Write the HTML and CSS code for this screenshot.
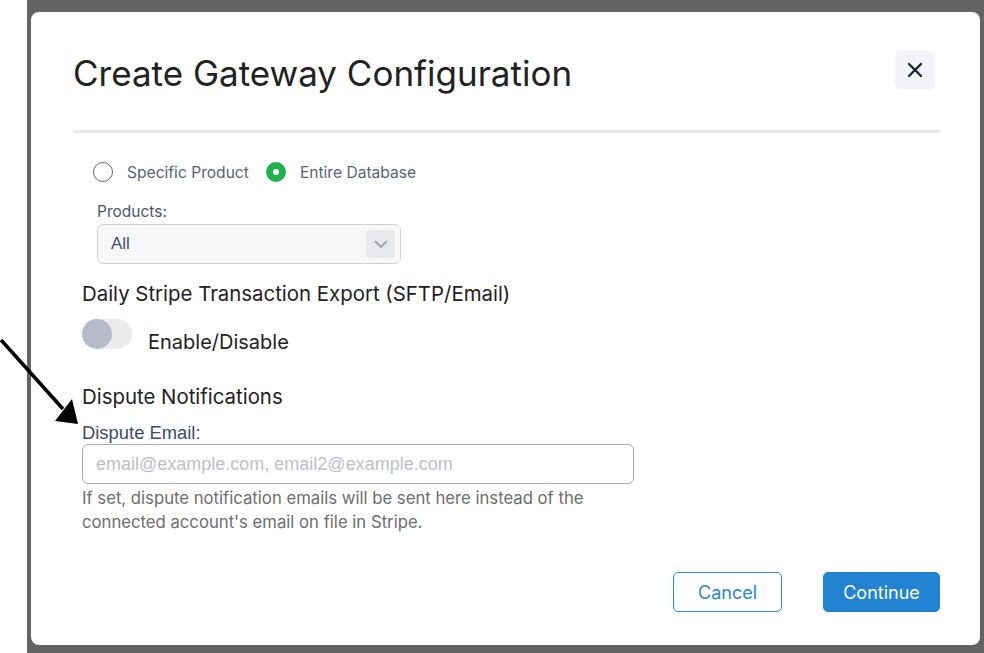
FILE: index.html
```html
<!DOCTYPE html>
<html lang="en">

<head>
  <meta charset="UTF-8">
  <meta name="viewport" content="width=device-width, initial-scale=1.0">
  <title>Create Gateway Configuration</title>
  <link rel="stylesheet" href="styles.css">
</head>

<body>
  <div class="margin"></div>

  <!-- pointer arrow drawn over the page -->
  <svg class="pointer" width="90" height="100" viewBox="0 0 90 100">
    <line x1="1" y1="10" x2="63" y2="79" stroke="#000" stroke-width="3.6" />
    <polygon points="78,94 55,91 72,69" fill="#000" />
  </svg>

  <div class="backdrop">
    <div class="modal">
      <div class="modalHeader">
        <h2 class="modalTitle">Create Gateway Configuration</h2>
        <button class="closeBtn">
          <svg width="16" height="16" viewBox="0 0 16 16">
            <path d="M2 2 L14 14 M14 2 L2 14" stroke="#1b2537" stroke-width="2.4" stroke-linecap="round" />
          </svg>
        </button>
      </div>

      <div class="modalBody">
        <div class="radioGroup">
          <label class="radio"><span class="radioDot"></span>Specific Product</label>
          <label class="radio"><span class="radioDot checked"></span>Entire Database</label>
        </div>

        <div class="productField">
          <div class="fieldLabel">Products:</div>
          <div class="select">
            <span>All</span>
            <span class="selectArrow">
              <svg width="16" height="10" viewBox="0 0 16 10">
                <path d="M2 2 L8 8 L14 2" fill="none" stroke="#9ba1ab" stroke-width="1.8" />
              </svg>
            </span>
          </div>
        </div>

        <h3 class="sectionTitle">Daily Stripe Transaction Export (SFTP/Email)</h3>
        <div class="toggleRow">
          <span class="toggle"><span class="knob"></span></span>
          <span class="toggleLabel">Enable/Disable</span>
        </div>

        <h3 class="sectionTitle dispute">Dispute Notifications</h3>
        <div class="emailLabel">Dispute Email:</div>
        <input class="emailInput" type="text" placeholder="email@example.com, email2@example.com">
        <p class="hint">If set, dispute notification emails will be sent here instead of the<br>connected account's email on file in Stripe.</p>
      </div>

      <div class="modalFooter">
        <button class="btn btnOutline">Cancel</button>
        <button class="btn btnPrimary">Continue</button>
      </div>
    </div>
  </div>
</body>

</html>
```

FILE: styles.css
```css
body {
  margin: 0;
  height: 653px;
  display: flex;
  background-color: #fff;
  font-family: Inter, "Liberation Sans", sans-serif;
  overflow: hidden;
}

.margin {
  width: 27px;
  flex-shrink: 0;
}

.pointer {
  position: absolute;
  left: 0;
  top: 330px;
  z-index: 5;
}

.backdrop {
  flex: 1;
  background-color: #636366;
  padding: 12px 4px 8px 4px;
  display: flex;
}

.modal {
  flex: 1;
  background: #fff;
  border-radius: 8px;
  padding: 38px 40px 0 42px;
  display: flex;
  flex-direction: column;
}

.modalHeader {
  display: flex;
  justify-content: space-between;
  align-items: center;
  padding-bottom: 40px;
  border-bottom: 3px solid #e9e9eb;
}

.modalTitle {
  margin: 0;
  font-size: 35px;
  font-weight: 400;
  color: #222;
  line-height: 40px;
  position: relative;
  top: 3px;
}

.closeBtn {
  width: 40px;
  height: 40px;
  border: none;
  border-radius: 6px;
  background: #f3f4f8;
  display: flex;
  align-items: center;
  justify-content: center;
  padding: 0;
  margin-right: 5px;
}

.modalBody {
  padding-left: 9px;
}

.radioGroup {
  display: flex;
  gap: 17px;
  margin: 27px 0 0 11px;
  height: 24px;
  align-items: center;
}

.radio {
  display: flex;
  align-items: center;
  gap: 14px;
  font-size: 15.6px;
  color: #5a6478;
}

.radioDot {
  width: 20px;
  height: 20px;
  box-sizing: border-box;
  border-radius: 50%;
  border: 1.5px solid #5b6475;
}

.radioDot.checked {
  border: 7px solid #22b24c;
  background: #fff;
}

.productField {
  margin: 18px 0 0 15px;
}

.fieldLabel {
  font-size: 15.5px;
  line-height: 20px;
  color: #4b566b;
}

.select {
  width: 304px;
  height: 40px;
  box-sizing: border-box;
  margin-top: 2px;
  border: 1px solid #cfd0d4;
  border-radius: 6px;
  background: #f7f7f8;
  display: flex;
  align-items: center;
  justify-content: space-between;
  padding: 0 5px 0 13px;
  font-family: "Liberation Sans", sans-serif;
  font-size: 17px;
  color: #465068;
}

.selectArrow {
  width: 29px;
  height: 28px;
  border-radius: 4px;
  background: #e8e9ec;
  display: flex;
  align-items: center;
  justify-content: center;
}

.sectionTitle {
  margin: 17px 0 0;
  font-size: 20.4px;
  font-weight: 400;
  line-height: 26px;
  color: #222;
}

.toggleRow {
  display: flex;
  gap: 16px;
  margin-top: 12px;
}

.toggle {
  width: 50px;
  height: 30px;
  border-radius: 15px;
  background: #ececee;
  display: flex;
}

.knob {
  width: 30px;
  height: 30px;
  border-radius: 50%;
  background: #b6bcc9;
}

.toggleLabel {
  font-size: 20px;
  line-height: 26px;
  color: #222;
  margin-top: 10px;
}

.sectionTitle.dispute {
  margin-top: 29px;
}

.emailLabel {
  margin-top: 12px;
  font-family: "Liberation Sans", sans-serif;
  font-size: 18.4px;
  line-height: 22px;
  color: #3d4a68;
}

.emailInput {
  display: block;
  width: 552px;
  height: 40px;
  box-sizing: border-box;
  border: 1px solid #a9adb7;
  border-radius: 6px;
  padding: 0 13px;
  font-family: "Liberation Sans", sans-serif;
  font-size: 18px;
  outline: none;
}

.emailInput::placeholder {
  color: #bcc0c8;
}

.hint {
  margin: 2px 0 0;
  font-size: 16.7px;
  line-height: 24px;
  color: #6d6d6f;
}

.modalFooter {
  margin-top: auto;
  padding-bottom: 33px;
  display: flex;
  justify-content: flex-end;
  gap: 41px;
}

.btn {
  height: 40px;
  border-radius: 5px;
  font-family: Inter, sans-serif;
  font-size: 18px;
  padding: 0;
}

.btnOutline {
  width: 109px;
  border: 1px solid #2e87d2;
  background: #fff;
  color: #2a86d4;
}

.btnPrimary {
  width: 117px;
  border: 1px solid #2283d2;
  background: #2283d2;
  color: #fff;
}
```
